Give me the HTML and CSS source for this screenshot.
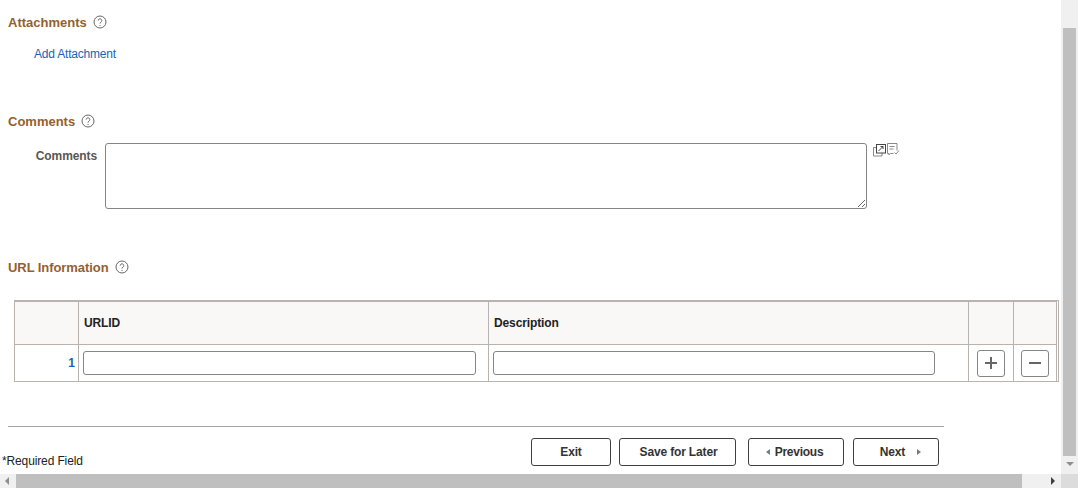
FILE: index.html
```html
<!DOCTYPE html>
<html lang="en">
<head>
<meta charset="utf-8">
<title>URL Information</title>
<link rel="stylesheet" href="styles.css">
</head>
<body>
<div class="window">
  <main class="page">
    <section class="attachments">
      <h2 class="heading">Attachments
        <svg class="help" viewBox="0 0 14 14"><circle cx="7" cy="7" r="6" /><path d="M5.200 5.600a1.800 1.800 0 1 1 2.800 1.500c-.7.4-1 .8-1 1.500" /><path d="M7 10v1" /></svg>
      </h2>
      <a class="add-link" href="#">Add Attachment</a>
    </section>
    <section class="comments">
      <h2 class="heading">Comments
        <svg class="help" viewBox="0 0 14 14"><circle cx="7" cy="7" r="6" /><path d="M5.200 5.600a1.800 1.800 0 1 1 2.800 1.500c-.7.4-1 .8-1 1.500" /><path d="M7 10v1" /></svg>
      </h2>
      <div class="comment-row">
        <label class="comment-label" for="c">Comments</label>
        <textarea class="comment-box" id="c"></textarea>
        <div class="comment-icons">
          <svg width="14" height="14" viewBox="0 0 14 14" class="ico"><path d="M3.500 4.500h-3v8.500h8.500v-3" /><rect x="3.500" y="1.500" width="9" height="8.500" fill="#fff" stroke="#444" /><path d="M5.500 8l4.500-4.500M7.500 3.500h2.500v2.500" stroke="#444" /></svg>
          <svg width="13" height="14" viewBox="0 0 13 14" class="ico"><path d="M6.500 10.500h-3l-1.500 1.500v-1.500h-1.500V.5h9.500v7" /><path d="M2.500 3.500h5M2.500 6h4" /><path d="M7.500 9.500l1.500 1.500 3-3.500" /></svg>
        </div>
      </div>
    </section>
    <section class="urls">
      <h2 class="heading url-heading">URL Information
        <svg class="help" viewBox="0 0 14 14"><circle cx="7" cy="7" r="6" /><path d="M5.200 5.600a1.800 1.800 0 1 1 2.800 1.500c-.7.4-1 .8-1 1.500" /><path d="M7 10v1" /></svg>
      </h2>
      <div class="grid">
        <div class="row head">
          <div class="cell c-num"></div>
          <div class="cell c-id">URLID</div>
          <div class="cell c-desc">Description</div>
          <div class="cell c-act"></div>
          <div class="cell c-act"></div>
        </div>
        <div class="row body-row">
          <div class="cell c-num"><a class="row-num" href="#">1</a></div>
          <div class="cell c-id"><input class="text-input" type="text"></div>
          <div class="cell c-desc"><input class="text-input" type="text"></div>
          <div class="cell c-act"><button class="icon-btn" type="button"><svg width="14" height="14" viewBox="0 0 14 14"><path d="M7 1v12M1 7h12" /></svg></button></div>
          <div class="cell c-act"><button class="icon-btn shift" type="button"><svg width="14" height="14" viewBox="0 0 14 14"><path d="M1 7h12" /></svg></button></div>
        </div>
      </div>
    </section>
    <footer class="footer">
      <hr class="rule">
      <div class="footer-row">
        <span class="required">*Required Field</span>
        <div class="actions">
          <button class="btn b-exit" type="button">Exit</button>
          <button class="btn b-save" type="button">Save for Later</button>
          <button class="btn b-prev" type="button"><span class="tri left"></span>Previous</button>
          <button class="btn b-next" type="button">Next<span class="tri right"></span></button>
        </div>
      </div>
    </footer>
  </main>
  <div class="vbar"><span class="vthumb"></span><span class="arrow-down"></span></div>
  <div class="hbar"><span class="arrow-left"></span><span class="hthumb"></span><span class="arrow-right"></span></div>
  <div class="corner"></div>
</div>
</body>
</html>
```
FILE: styles.css
```css
* { box-sizing: border-box; }
html, body { margin: 0; height: 100%; overflow: hidden; background: #fff; }
body { font-family: "Liberation Sans", Arial, sans-serif; font-size: 12px; color: #333; }
.window {
  display: grid;
  grid-template-columns: 1061px 17px;
  grid-template-rows: 474px 14px;
  width: 1078px;
  height: 488px;
}
.page { overflow: hidden; min-width: 0; }
.heading {
  display: flex;
  align-items: center;
  gap: 6px;
  height: 16px;
  margin: 0;
  font-size: 13px;
  font-weight: 700;
  color: #95602f;
}
.url-heading { letter-spacing: -0.07px; }
.help { width: 14px; height: 14px; fill: none; stroke: #666; stroke-width: 1; }
.attachments { padding: 14px 0 0 8px; height: 113px; }
.add-link {
  display: block;
  margin: 17px 0 0 26px;
  line-height: 14px;
  letter-spacing: -0.2px;
  color: #1c62b4;
  text-decoration: none;
}
.comments { padding-left: 8px; height: 146px; }
.comment-row { display: flex; align-items: flex-start; margin-top: 14px; }
.comment-label {
  width: 89px;
  padding-top: 6px;
  text-align: right;
  font-weight: 700;
  line-height: 14px;
  letter-spacing: -0.1px;
  color: #5a5652;
}
.comment-box {
  display: block;
  width: 762px;
  height: 66px;
  margin: 0 0 0 8px;
  border: 1px solid #858585;
  border-radius: 3px;
  background: #fff;
  resize: both;
}
.comment-icons { display: flex; align-items: flex-start; margin: 0 0 0 6px; }
.ico { fill: none; stroke: #888; stroke-width: 1; }
.urls { padding-left: 8px; }
.grid {
  width: 1045px;
  margin: 25px 0 0 6px;
  border: 1px solid #b8b3ae;
  border-top-width: 2px;
  border-right-width: 3px;
  border-right-style: double;
}
.row { display: grid; grid-template-columns: 64px 410px 480px 45px 1fr; }
.head { height: 43px; background: #f9f8f6; border-bottom: 1px solid #b8b3ae; }
.body-row { height: 36px; }
.cell { display: flex; align-items: center; border-right: 1px solid #b8b3ae; min-width: 0; }
.cell:last-child { border-right: 0; }
.head .cell { font-weight: 700; letter-spacing: -0.12px; color: #222; padding: 0 0 0 5px; }
.c-num { justify-content: flex-end; padding-right: 3px; }
.row-num { color: #1c62b4; font-weight: 700; text-decoration: none; }
.text-input {
  display: block;
  height: 24px;
  margin: 0;
  border: 1px solid #858585;
  border-radius: 3px;
  background: #fff;
}
.body-row .c-id { padding-left: 4px; }
.body-row .c-id .text-input { width: 393px; }
.body-row .c-desc { padding-left: 4px; }
.body-row .c-desc .text-input { width: 442px; }
.c-act { justify-content: center; }
.icon-btn {
  display: flex;
  align-items: center;
  justify-content: center;
  width: 28px;
  height: 27px;
  padding: 0;
  border: 1px solid #858585;
  border-radius: 3px;
  background: #fff;
}
.icon-btn.shift { margin-right: 1px; }
.icon-btn svg { fill: none; stroke: #666; stroke-width: 2; }
.footer { padding: 44px 0 0 0; }
.rule { width: 936px; margin: 0 0 0 8px; border: 0; border-top: 1px solid #a5a3a6; height: 1px; }
.footer-row { position: relative; display: flex; justify-content: flex-end; padding: 11px 122px 0 0; }
.required { position: absolute; left: 2px; top: 27px; line-height: 14px; letter-spacing: -0.13px; color: #222; }
.actions { display: flex; }
.btn {
  display: flex;
  align-items: center;
  justify-content: center;
  height: 28px;
  padding: 0;
  border: 1px solid #3f3f3f;
  border-radius: 3px;
  background: #fff;
  font: 700 12px "Liberation Sans", Arial, sans-serif;
  letter-spacing: -0.15px;
  color: #333;
}
.b-exit { width: 80px; margin-right: 8px; }
.b-save { width: 117px; margin-right: 12px; padding-left: 2px; }
.b-prev { width: 96px; margin-right: 9px; gap: 5px; padding-right: 3px; letter-spacing: -0.25px; }
.b-next { width: 86px; gap: 12px; padding-left: 9px; }
.tri { width: 0; height: 0; border-top: 3.500px solid transparent; border-bottom: 3.500px solid transparent; }
.tri.left { border-right: 4px solid #6c7f92; }
.tri.right { border-left: 4px solid #6c7f92; }
.vbar { position: relative; background: #f0f0f0; grid-row: 1; grid-column: 2; padding: 28px 2px 0; }
.vthumb { display: block; width: 13px; height: 428px; background: #bfbfbf; }
.arrow-down {
  position: absolute; left: 5px; top: 462px; width: 0; height: 0;
  border-left: 4px solid transparent; border-right: 4px solid transparent; border-top: 4px solid #8e8e8e;
}
.hbar { display: flex; align-items: center; background: #f0f0f0; grid-row: 2; grid-column: 1; }
.hthumb { display: block; width: 1006px; height: 14px; background: #bfbfbf; }
.arrow-left {
  width: 0; height: 0; margin: 0 7px 0 5px;
  border-top: 4px solid transparent; border-bottom: 4px solid transparent; border-right: 4px solid #8e8e8e;
}
.arrow-right {
  width: 0; height: 0; margin-left: 29px;
  border-top: 4px solid transparent; border-bottom: 4px solid transparent; border-left: 4px solid #404040;
}
.corner { background: #dcdcdc; grid-row: 2; grid-column: 2; }
```
